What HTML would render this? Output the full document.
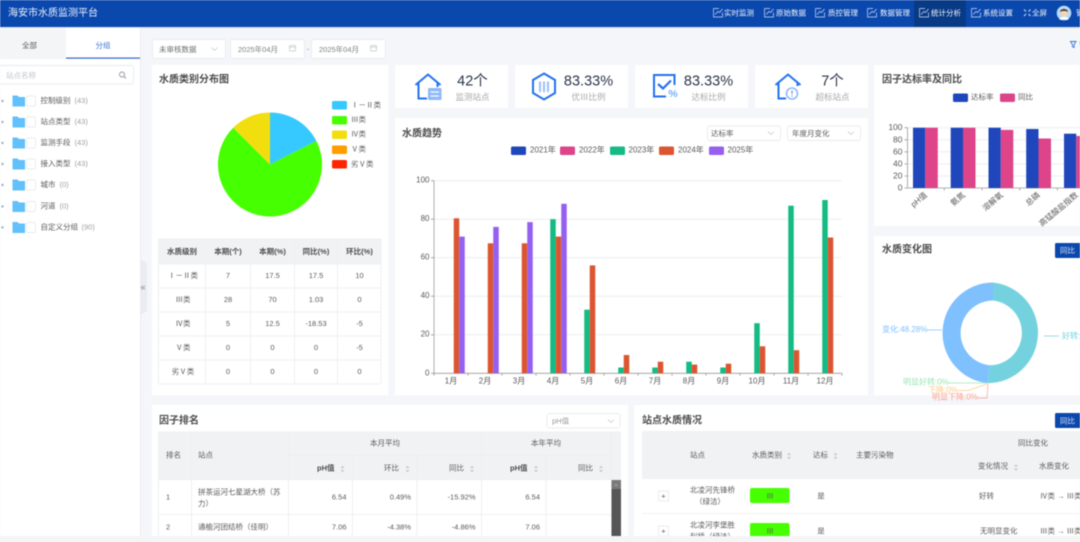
<!DOCTYPE html>
<html lang="zh"><head><meta charset="utf-8"><title>海安市水质监测平台</title>
<style>
html,body{margin:0;padding:0;background:#f4f6fa;overflow:hidden;width:1080px;height:542px}
svg{display:block;filter:blur(.45px)}
text{font-family:"Liberation Sans","Noto Sans CJK SC",sans-serif;dominant-baseline:central;font-size:7.5px;fill:#5a5a5a}
.n text{fill:#fff;font-size:7.5px;opacity:.95}
.t{font-size:10px;font-weight:bold;fill:#4c4c4c}
.c{text-anchor:middle}
.r{text-anchor:end}
.g{fill:#a0a0a0}
.b{font-weight:bold;fill:#4c4c4c}
.big{font-size:14.5px;fill:#2b3448;text-anchor:middle}
.sub{font-size:8.5px;fill:#aaa;text-anchor:middle}
.l{stroke:#ebedf0;stroke-width:.8;fill:none}
.box{fill:#fff;stroke:#e3e5e9;stroke-width:.7}
.ax{stroke:#999;stroke-width:.8;fill:none}
.gl{stroke:#eceef1;stroke-width:1}
.ic{fill:none;stroke:#2272f0;stroke-width:2}
</style></head><body>
<svg width="1080" height="542" viewBox="0 0 1080 542" xmlns="http://www.w3.org/2000/svg">
<defs>
<g id="nv"><path d="M-4.500 -4H1M4.500 0V4.500H-4.500V-4" fill="none" stroke="#cfdcf2" stroke-width=".7"/><path d="M-3 2L0 -1L1.500 0L4.500 -3.500" fill="none" stroke="#cfdcf2" stroke-width=".7"/></g>
<g id="s"><path d="M-2 -1L0 -3.200L2 -1Z M-2 1L0 3.200L2 1Z" fill="#c4c7cc"/></g>
<g id="v"><path d="M-3 -1.500L0 1.500L3 -1.500" fill="none" stroke="#c0c4cc" stroke-width=".7"/></g>
<g id="fd"><path d="M0 -5H5L6.500 -3.500H12.500V6H0Z" fill="#62c0fb"/><rect x="14" y="-4.500" width="9" height="10" rx="1.500" fill="#fff" stroke="#e3e5e9" stroke-width=".7"/><circle cx="-10" cy=".5" r="1.200" fill="#9db0c8"/></g>
<g id="cal"><rect x="-3" y="-2.500" width="6" height="5.500" rx=".7" fill="none" stroke="#c0c4cc" stroke-width=".7"/><path d="M-3 -.8H3" stroke="#c0c4cc" stroke-width=".7"/></g>
<clipPath id="pg"><rect width="1080" height="536"/></clipPath>
</defs>
<rect width="1080" height="542" fill="#f4f6fa"/>

<!-- header -->
<rect width="1080" height="27" fill="#0b48ae"/>
<rect y="27" width="1080" height="1.500" fill="#dfe3ea"/>
<rect x="914" width="52" height="27" fill="#093a85"/>
<text x="8" y="13.500" style="font-size:10px;fill:#fff;opacity:.92">海安市水质监测平台</text>
<g class="n">
<use href="#nv" x="718" y="12.500"/><text x="724" y="13">实时监测</text>
<use href="#nv" x="769" y="12.500"/><text x="776" y="13">原始数据</text>
<use href="#nv" x="820" y="12.500"/><text x="828" y="13">质控管理</text>
<use href="#nv" x="872" y="12.500"/><text x="880" y="13">数据管理</text>
<use href="#nv" x="924" y="12.500"/><text x="931" y="13">统计分析</text>
<use href="#nv" x="976" y="12.500"/><text x="983" y="13">系统设置</text>
<path d="M1024 9.500l2 2M1030.500 9.500l-2 2M1024 16l2-2M1030.500 16l-2-2" stroke="#dfe8f6" stroke-width=".9"/><text x="1032" y="13">全屏</text>
<text x="1076" y="13">管</text>
</g>
<circle cx="1064" cy="13" r="7.300" fill="#b8dcf5"/>
<circle cx="1064" cy="13" r="3.500" fill="#f6d3b4"/>
<path d="M1060 12c0-4 8-4 8 0c-2-1.500-6-1.500-8 0Z" fill="#4a3a30"/>
<path d="M1059 19c2-3 8-3 10 0l-2 1h-6Z" fill="#fff"/>

<!-- sidebar -->
<rect y="28" width="140" height="514" fill="#fff"/>
<rect y="28" width="66" height="31" fill="#f4f5f7"/>
<rect x="66" y="57.500" width="74" height="1.200" fill="#2b66cf"/>
<text x="29.500" y="45.500" class="c">全部</text>
<text x="103" y="45.500" class="c" style="fill:#3a74d6">分组</text>
<rect x="-3" y="65.500" width="136.500" height="18.500" rx="2" class="box"/>
<text x="6" y="75.500" style="fill:#c0c4cc">站点名称</text>
<circle cx="122" cy="74.500" r="2.500" fill="none" stroke="#909399" stroke-width=".9"/><path d="M124 76.500l2 2" stroke="#909399" stroke-width=".9"/>
<use href="#fd" x="12.500" y="100.500"/><text x="40.500" y="100.500">控制级别</text><text x="74.500" y="100.500" class="g">(43)</text>
<use href="#fd" x="12.500" y="121.500"/><text x="40.500" y="121.500">站点类型</text><text x="74.500" y="121.500" class="g">(43)</text>
<use href="#fd" x="12.500" y="142.500"/><text x="40.500" y="142.500">监测手段</text><text x="74.500" y="142.500" class="g">(43)</text>
<use href="#fd" x="12.500" y="163.500"/><text x="40.500" y="163.500">接入类型</text><text x="74.500" y="163.500" class="g">(43)</text>
<use href="#fd" x="12.500" y="184.500"/><text x="40.500" y="184.500">城市</text><text x="59.500" y="184.500" class="g">(0)</text>
<use href="#fd" x="12.500" y="206"/><text x="40.500" y="206">河道</text><text x="59.500" y="206" class="g">(0)</text>
<use href="#fd" x="12.500" y="227"/><text x="40.500" y="227">自定义分组</text><text x="81.500" y="227" class="g">(90)</text>
<path d="M140.500 28V536" stroke="#e8eaee" stroke-width=".8"/>
<path d="M140 259L147 263V311L140 315Z" fill="#eaecf1"/>
<text x="143" y="287" class="c" style="font-size:9px;fill:#7a869a">«</text>

<!-- filter row -->
<rect x="152.500" y="39.500" width="73" height="19" rx="2" class="box"/>
<text x="159" y="49.500" style="fill:#6e6e6e">未审核数据</text><use href="#v" x="214.500" y="49"/>
<rect x="230.500" y="39.500" width="74" height="19" rx="2" class="box"/>
<text x="238" y="49.500" style="fill:#808080">2025年04月</text><use href="#cal" x="292.500" y="48"/>
<text x="308" y="49" class="c" style="fill:#888">-</text>
<rect x="311.500" y="39.500" width="74" height="19" rx="2" class="box"/>
<text x="319" y="49.500" style="fill:#808080">2025年04月</text><use href="#cal" x="373.500" y="48"/>
<path d="M1070.500 41.500h5.500l-1.900 3v3l-1.700-.8v-2.200Z" fill="none" stroke="#3a74d6" stroke-width=".9"/>
<text x="1079" y="44" style="fill:#3a74d6">筛</text>

<!-- card 1 -->
<rect x="152" y="65" width="236.500" height="330.500" fill="#fff"/>
<text x="159" y="80" class="t">水质类别分布图</text>
<rect x="332" y="101" width="15" height="8.500" rx="1.500" fill="#36c9ff"/><text x="351" y="105">Ⅰ－Ⅱ类</text>
<rect x="332" y="116" width="15" height="8.500" rx="1.500" fill="#46ff00"/><text x="351" y="119.500">Ⅲ类</text>
<rect x="332" y="130.500" width="15" height="8.500" rx="1.500" fill="#f2de0e"/><text x="351" y="134">Ⅳ类</text>
<rect x="332" y="145.500" width="15" height="8.500" rx="1.500" fill="#ff9c00"/><text x="351" y="149">Ⅴ类</text>
<rect x="332" y="160" width="15" height="8.500" rx="1.500" fill="#ff2500"/><text x="351" y="164">劣Ⅴ类</text>
<path d="M270 164.500V112.500A52 52 0 0 1 316.330 140.900Z" fill="#36c9ff"/>
<path d="M270 164.500L316.330 140.900A52 52 0 1 1 233.230 127.730Z" fill="#46ff00"/>
<path d="M270 164.500L233.230 127.730A52 52 0 0 1 270 112.500Z" fill="#f2de0e"/>

<rect x="158.500" y="239" width="222.500" height="25" fill="#f1f2f4"/>
<path class="l" d="M158.500 239H381V384H158.500ZM158.500 264H381M158.500 288H381M158.500 312H381M158.500 336H381M158.500 360H381M205.500 239V384M250.500 239V384M294.500 239V384M337.500 239V384"/>
<text x="182" y="251.500" class="c b">水质级别</text><text x="228" y="251.500" class="c b">本期(个)</text><text x="272.500" y="251.500" class="c b">本期(%)</text><text x="316" y="251.500" class="c b">同比(%)</text><text x="359.500" y="251.500" class="c b">环比(%)</text>
<text x="183" y="275.500" class="c">Ⅰ－Ⅱ类</text><text x="228" y="275.500" class="c">7</text><text x="272.500" y="275.500" class="c">17.5</text><text x="316" y="275.500" class="c">17.5</text><text x="359.500" y="275.500" class="c">10</text>
<text x="183" y="299.500" class="c">Ⅲ类</text><text x="228" y="299.500" class="c">28</text><text x="272.500" y="299.500" class="c">70</text><text x="316" y="299.500" class="c">1.03</text><text x="359.500" y="299.500" class="c">0</text>
<text x="183" y="323.500" class="c">Ⅳ类</text><text x="228" y="323.500" class="c">5</text><text x="272.500" y="323.500" class="c">12.5</text><text x="316" y="323.500" class="c">-18.53</text><text x="359.500" y="323.500" class="c">-5</text>
<text x="183" y="347.500" class="c">Ⅴ类</text><text x="228" y="347.500" class="c">0</text><text x="272.500" y="347.500" class="c">0</text><text x="316" y="347.500" class="c">0</text><text x="359.500" y="347.500" class="c">-5</text>
<text x="183" y="371.500" class="c">劣Ⅴ类</text><text x="228" y="371.500" class="c">0</text><text x="272.500" y="371.500" class="c">0</text><text x="316" y="371.500" class="c">0</text><text x="359.500" y="371.500" class="c">0</text>

<!-- stat cards -->
<rect x="395" y="65" width="113" height="43" rx="1.500" fill="#fff"/>
<rect x="515" y="65" width="113" height="43" rx="1.500" fill="#fff"/>
<rect x="635" y="65" width="113" height="43" rx="1.500" fill="#fff"/>
<rect x="755" y="65" width="113" height="43" rx="1.500" fill="#fff"/>
<path class="ic" d="M415.500 85L428 74.500L440.500 85"/><path class="ic" d="M418.500 83V98.500H427M437.500 83V87"/>
<rect x="428" y="88" width="13.500" height="12" rx="1" fill="#8fb8fa"/><path d="M430.500 92H439M430.500 96H439" stroke="#fff" stroke-width="1.300"/>
<text x="472.500" y="81.500" class="big">42个</text><text x="472.500" y="97" class="sub">监测站点</text>
<path class="ic" d="M544 73.500L555 80V93L544 99.500L533 93V80Z"/><path d="M540 81.500V92M544 81.500V92M548 81.500V92" stroke="#8fb8fa" stroke-width="1.800"/>
<text x="588.500" y="81.500" class="big">83.33%</text><text x="588.500" y="97" class="sub">优Ⅲ比例</text>
<path class="ic" d="M674.500 85V75H654V96.500H666"/><path d="M658 84L663 88.500L671 80.500" fill="none" stroke="#2272f0" stroke-width="2.200"/>
<text x="673" y="94" class="c" style="font-size:10.500px;font-weight:bold;fill:#6fb0f5">%</text>
<text x="708.500" y="81.500" class="big">83.33%</text><text x="708.500" y="97" class="sub">达标比例</text>
<path class="ic" d="M775.500 85L788 74.500L800.500 85"/><path class="ic" d="M778.500 83V98.500H786M797.500 83V86"/>
<circle cx="792" cy="93.500" r="5.500" fill="#fff" stroke="#8fb8fa" stroke-width="1.600"/><path d="M792 90.500V94M792 95.200V96.600" stroke="#6a9ff5" stroke-width="1.300"/>
<text x="832.500" y="81.500" class="big">7个</text><text x="832.500" y="97" class="sub">超标站点</text>

<!-- trend card -->
<rect x="395" y="118" width="473" height="277.500" fill="#fff"/>
<text x="402" y="134" class="t">水质趋势</text>
<rect x="707.500" y="126" width="73" height="14.500" rx="2" class="box"/><text x="711" y="133.500">达标率</text><use href="#v" x="771" y="133"/>
<rect x="787.500" y="126" width="73" height="14.500" rx="2" class="box"/><text x="792" y="133.500">年度月变化</text><use href="#v" x="851" y="133"/>
<rect x="511" y="146.500" width="15" height="8.500" rx="1.500" fill="#1f47bb"/><text x="530" y="150" style="font-size:8px">2021年</text>
<rect x="560" y="146.500" width="15" height="8.500" rx="1.500" fill="#dd4489"/><text x="579" y="150" style="font-size:8px">2022年</text>
<rect x="610" y="146.500" width="15" height="8.500" rx="1.500" fill="#15ba84"/><text x="628.500" y="150" style="font-size:8px">2023年</text>
<rect x="659" y="146.500" width="15" height="8.500" rx="1.500" fill="#dc5530"/><text x="678" y="150" style="font-size:8px">2024年</text>
<rect x="709" y="146.500" width="15" height="8.500" rx="1.500" fill="#9560f0"/><text x="727.500" y="150" style="font-size:8px">2025年</text>
<path class="gl" d="M434 180.700H842M434 219.200H842M434 257.700H842M434 296.200H842M434 334.800H842"/>
<path class="ax" d="M434 180.700V373.300M431 180.700H434M431 219.200H434M431 257.700H434M431 296.200H434M431 334.800H434M431 373.300H842"/>
<path class="ax" d="M434 373.300v2.500M468 373.300v2.500M502 373.300v2.500M536 373.300v2.500M570 373.300v2.500M604 373.300v2.500M638 373.300v2.500M672 373.300v2.500M706 373.300v2.500M740 373.300v2.500M774 373.300v2.500M808 373.300v2.500M842 373.300v2.500"/>
<text x="429.500" y="180" class="r" style="font-size:8px">100</text><text x="429.500" y="218.500" class="r" style="font-size:8px">80</text><text x="429.500" y="257" class="r" style="font-size:8px">60</text><text x="429.500" y="295.500" class="r" style="font-size:8px">40</text><text x="429.500" y="334" class="r" style="font-size:8px">20</text><text x="429.500" y="373" class="r" style="font-size:8px">0</text>
<text x="451" y="381" class="c" style="font-size:8px">1月</text><text x="485" y="381" class="c" style="font-size:8px">2月</text><text x="519" y="381" class="c" style="font-size:8px">3月</text><text x="553" y="381" class="c" style="font-size:8px">4月</text><text x="587" y="381" class="c" style="font-size:8px">5月</text><text x="621" y="381" class="c" style="font-size:8px">6月</text><text x="655" y="381" class="c" style="font-size:8px">7月</text><text x="689" y="381" class="c" style="font-size:8px">8月</text><text x="723" y="381" class="c" style="font-size:8px">9月</text><text x="757" y="381" class="c" style="font-size:8px">10月</text><text x="791" y="381" class="c" style="font-size:8px">11月</text><text x="825" y="381" class="c" style="font-size:8px">12月</text>
<g fill="#15ba84">
<rect x="550.250" y="219.200" width="5.500" height="154.100"/><rect x="584.250" y="309.700" width="5.500" height="63.600"/><rect x="618.250" y="367.500" width="5.500" height="5.800"/><rect x="652.250" y="367.500" width="5.500" height="5.800"/><rect x="686.250" y="361.700" width="5.500" height="11.600"/><rect x="720.250" y="367.500" width="5.500" height="5.800"/><rect x="754.250" y="323.200" width="5.500" height="50.100"/><rect x="788.250" y="205.700" width="5.500" height="167.600"/><rect x="822.250" y="200" width="5.500" height="173.300"/>
</g>
<g fill="#dc5530">
<rect x="453.750" y="218.300" width="5.500" height="155"/><rect x="487.750" y="243.300" width="5.500" height="130"/><rect x="521.750" y="243.300" width="5.500" height="130"/><rect x="555.750" y="236.600" width="5.500" height="136.700"/><rect x="589.750" y="265.400" width="5.500" height="107.900"/><rect x="623.750" y="355" width="5.500" height="18.300"/><rect x="657.750" y="361.700" width="5.500" height="11.600"/><rect x="691.750" y="364.600" width="5.500" height="8.700"/><rect x="725.750" y="363.700" width="5.500" height="9.600"/><rect x="759.750" y="346.300" width="5.500" height="27"/><rect x="793.750" y="350.200" width="5.500" height="23.100"/><rect x="827.750" y="237.500" width="5.500" height="135.800"/>
</g>
<g fill="#9560f0">
<rect x="459.250" y="236.600" width="5.500" height="136.700"/><rect x="493.250" y="226.900" width="5.500" height="146.400"/><rect x="527.250" y="222.100" width="5.500" height="151.200"/><rect x="561.250" y="203.800" width="5.500" height="169.500"/>
</g>

<!-- right card 1 -->
<rect x="874" y="65" width="206" height="161" fill="#fff"/>
<text x="882" y="80" class="t">因子达标率及同比</text>
<rect x="953" y="93.500" width="15" height="8.500" rx="1.500" fill="#1f47bb"/><text x="971" y="97">达标率</text>
<rect x="1000" y="93.500" width="15" height="8.500" rx="1.500" fill="#dd4489"/><text x="1018" y="97">同比</text>
<path class="gl" d="M907.500 127.700H1080M907.500 139.800H1080M907.500 151.800H1080M907.500 163.900H1080M907.500 176H1080"/>
<path class="ax" d="M907.500 127.700V188M904.500 127.700H907.500M904.500 139.800H907.500M904.500 151.800H907.500M904.500 163.900H907.500M904.500 176H907.500M904.500 188H1080"/>
<path class="ax" d="M944.300 188v2.500M982 188v2.500M1019.700 188v2.500M1057.400 188v2.500"/>
<text x="902.500" y="127" class="r" style="font-size:8.500px">100</text><text x="902.500" y="139.300" class="r" style="font-size:8.500px">80</text><text x="902.500" y="151.300" class="r" style="font-size:8.500px">60</text><text x="902.500" y="163.300" class="r" style="font-size:8.500px">40</text><text x="902.500" y="175.500" class="r" style="font-size:8.500px">20</text><text x="902.500" y="187.500" class="r" style="font-size:8.500px">0</text>
<g fill="#1f47bb"><rect x="913" y="127.700" width="12.300" height="60.300"/><rect x="950.700" y="127.700" width="12.300" height="60.300"/><rect x="988.500" y="127.700" width="12.300" height="60.300"/><rect x="1026.200" y="129" width="12.300" height="59"/><rect x="1064" y="133.700" width="12.300" height="54.300"/></g>
<g fill="#dd4489"><rect x="925.300" y="127.700" width="12.500" height="60.300"/><rect x="963" y="127.700" width="12.500" height="60.300"/><rect x="1000.800" y="129.900" width="12.500" height="58.100"/><rect x="1038.500" y="138.500" width="12.500" height="49.500"/><rect x="1076.300" y="136" width="12.500" height="52"/></g>
<text transform="translate(926 194) rotate(-40)" style="text-anchor:end;font-size:8px">pH值</text>
<text transform="translate(964 194) rotate(-40)" style="text-anchor:end;font-size:8px">氨氮</text>
<text transform="translate(1002 194) rotate(-40)" style="text-anchor:end;font-size:8px">溶解氧</text>
<text transform="translate(1039 194) rotate(-40)" style="text-anchor:end;font-size:8px">总磷</text>
<text transform="translate(1077 194) rotate(-40)" style="text-anchor:end;font-size:8px">高锰酸盐指数</text>

<!-- right card 2 -->
<rect x="874" y="236" width="206" height="159.500" fill="#fff"/>
<text x="882" y="250" class="t">水质变化图</text>
<rect x="1055" y="243" width="27" height="15" rx="1.500" fill="#0b48ae"/><text x="1060" y="250.500" style="fill:#dbe5f6">同比</text>
<path d="M993 282.500A50.500 50.500 0 0 1 987.550 383.200L989.500 365.300A32.500 32.500 0 0 0 993 300.500Z" fill="#74d2de"/>
<path d="M993 282.500A50.500 50.500 0 0 0 987.550 383.200L989.500 365.300A32.500 32.500 0 0 1 993 300.500Z" fill="#7fc0ff"/>
<text x="882" y="329.500" style="fill:#7fc0ff;font-size:8px">变化:48.28%</text>
<path d="M927 330H942" stroke="#7fc0ff" stroke-width=".7"/>
<path d="M1044 336H1059" stroke="#74d2de" stroke-width=".7"/>
<text x="1062" y="336" style="fill:#74d2de;font-size:8px">好转:51.72%</text>
<text x="903" y="382" style="fill:#9ce6b6;font-size:8px">明显好转:0%</text>
<path d="M948 383H987" stroke="#9ce6b6" stroke-width=".7" fill="none"/>
<text x="928" y="390" style="fill:#ffcb85;font-size:8px">下降:0%</text>
<path d="M958 390.500H968L987 384" stroke="#ffcb85" stroke-width=".7" fill="none"/>
<text x="932" y="397" style="fill:#ff9f8f;font-size:8px">明显下降:0%</text>
<path d="M977 398H987L988 384" stroke="#ff9f8f" stroke-width=".7" fill="none"/>

<g clip-path="url(#pg)">
<!-- factor ranking -->
<rect x="152" y="405" width="476" height="137" fill="#fff"/>
<text x="159" y="421" class="t">因子排名</text>
<rect x="547" y="413.500" width="73" height="14.500" rx="2" class="box"/><text x="552" y="421" style="fill:#999">pH值</text><use href="#v" x="611" y="421"/>
<rect x="158.500" y="431.500" width="462.500" height="48" fill="#f1f2f4"/>
<path class="l" d="M158.500 431.500V542M191.500 431.500V542M288.500 431.500V542M352.500 455.500V542M417 455.500V542M481.500 431.500V542M546 455.500V542M611 431.500V480M288.500 455.500H611M158.500 479.500H611M158.500 514.500H611"/>
<rect x="611" y="479.500" width="10" height="57" fill="#f1f1f1"/>
<rect x="611.500" y="480" width="9.500" height="56" fill="#565656"/>
<rect x="611.500" y="480" width="9.500" height="9" fill="#7a7a7a"/>
<path d="M614 486l2-2.500l2 2.500Z" fill="#999"/>
<text x="385" y="443" class="c">本月平均</text><text x="546" y="443" class="c">本年平均</text>
<text x="166" y="455">排名</text><text x="198" y="455">站点</text>
<text x="317" y="468" class="b">pH值</text><use href="#s" x="342.500" y="469"/>
<text x="384" y="468">环比</text><use href="#s" x="407.500" y="469"/>
<text x="449" y="468">同比</text><use href="#s" x="472" y="469"/>
<text x="510" y="468" class="b">pH值</text><use href="#s" x="536" y="469"/>
<text x="578" y="468">同比</text><use href="#s" x="601" y="469"/>
<text x="166" y="497">1</text>
<text x="198" y="492">拼茶运河七星湖大桥（苏</text><text x="198" y="503.500">力）</text>
<text x="346.500" y="497" class="r">6.54</text><text x="411" y="497" class="r">0.49%</text><text x="475.500" y="497" class="r">-15.92%</text><text x="540" y="497" class="r">6.54</text>
<text x="166" y="527">2</text><text x="198" y="527">通榆河团结桥（佳明）</text>
<text x="346.500" y="527" class="r">7.06</text><text x="411" y="527" class="r">-4.38%</text><text x="475.500" y="527" class="r">-4.86%</text><text x="540" y="527" class="r">7.06</text>

<!-- station quality -->
<rect x="634" y="405" width="446" height="137" fill="#fff"/>
<text x="642" y="421" class="t">站点水质情况</text>
<rect x="1055" y="413" width="27" height="15" rx="1.500" fill="#0b48ae"/><text x="1060" y="421" style="fill:#dbe5f6">同比</text>
<rect x="642" y="431" width="438" height="48" fill="#f1f2f4"/>
<text x="690" y="455">站点</text>
<text x="752" y="455">水质类别</text><use href="#s" x="789" y="456"/>
<text x="813" y="455">达标</text><use href="#s" x="835.500" y="456"/>
<text x="856" y="455">主要污染物</text>
<text x="1018" y="443">同比变化</text>
<text x="978" y="466">变化情况</text><use href="#s" x="1016" y="467.500"/>
<text x="1039" y="466">水质变化</text>
<path class="l" d="M642 513.500H1080"/>
<rect x="658.500" y="491" width="10" height="10" class="box" stroke-width=".5"/><text x="663.500" y="496" class="c">+</text>
<text x="690" y="490">北凌河先锋桥</text><text x="695" y="501.500">（绿洁）</text>
<rect x="750" y="488" width="39.500" height="15" rx="2" fill="#46ff00"/><text x="770" y="496" class="c">Ⅲ</text>
<text x="821" y="496" class="c">是</text>
<text x="979" y="496">好转</text><text x="1040" y="496">Ⅳ类 → Ⅲ类</text>
<rect x="658.500" y="526" width="10" height="10" class="box" stroke-width=".5"/><text x="663.500" y="531" class="c">+</text>
<text x="690" y="525">北凌河李堡胜</text><text x="690" y="536.500">利桥（绿洁）</text>
<rect x="750" y="523" width="39.500" height="15" rx="2" fill="#46ff00"/><text x="770" y="531" class="c">Ⅲ</text>
<text x="821" y="531" class="c">是</text>
<text x="980" y="531">无明显变化</text><text x="1040" y="531">Ⅲ类 → Ⅲ类</text>
</g>
<rect y="536" width="1080" height="6" fill="#f4f5f7"/>
</svg>
</body></html>
